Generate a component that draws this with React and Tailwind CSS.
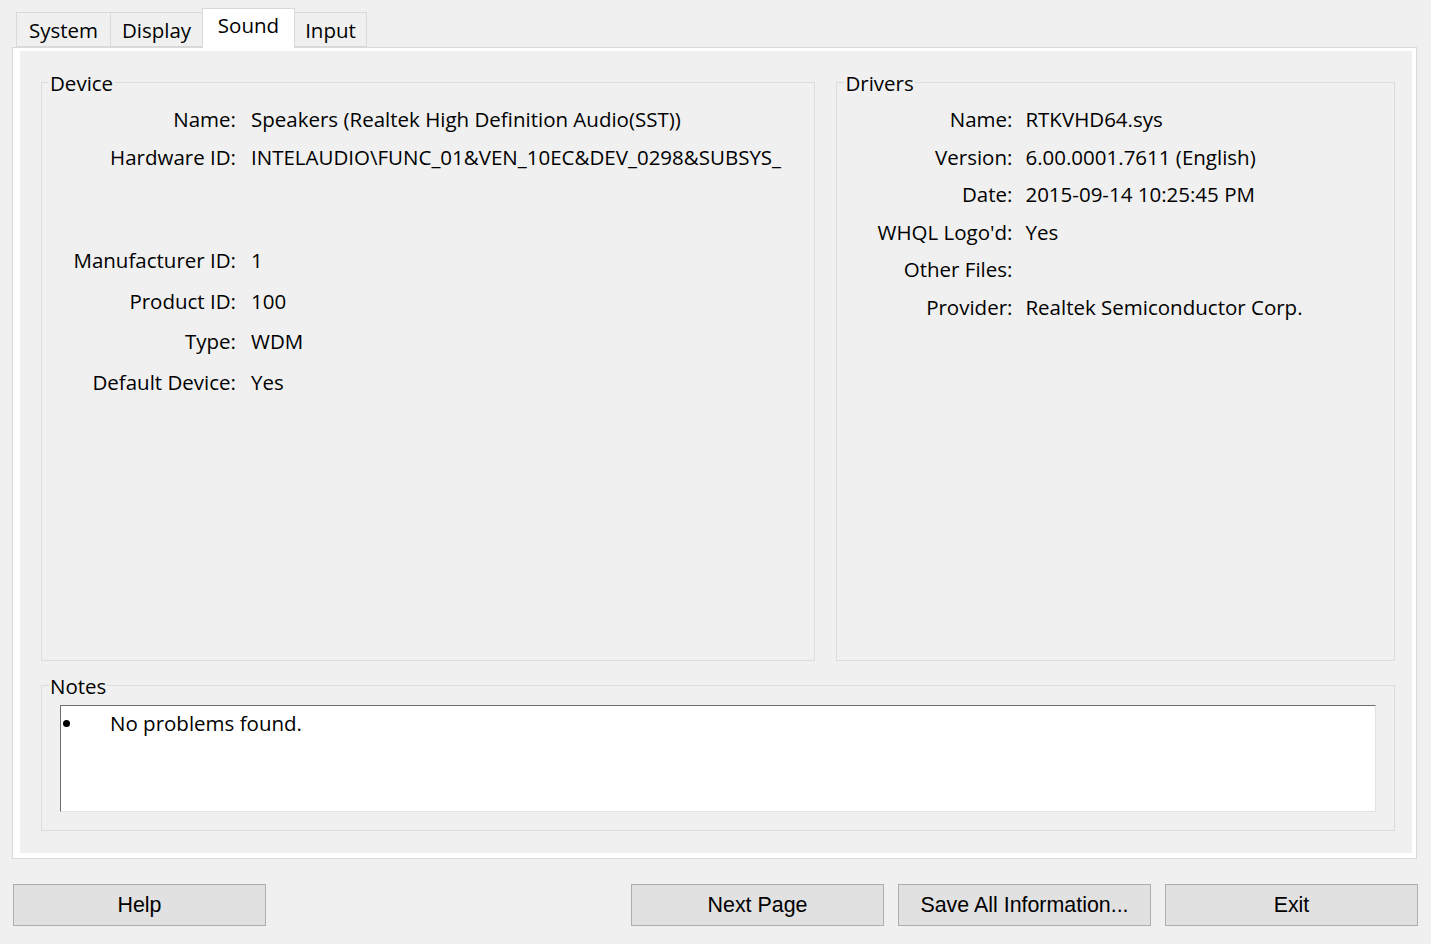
import React from 'react';

const ui = { fontFamily: '"Open Sans", "Noto Sans", sans-serif' };
const btnFont = { fontFamily: '"Liberation Sans", Arial, sans-serif' };

const Tab = ({ label, active, w }) => (
    <div
        className={`flex items-center justify-center border border-[#d9d9d9] ${active ? 'bg-white border-b-0 h-[40px] pb-[6px] -mb-px relative z-10' : 'bg-[#f0f0f0] h-[35px] pt-[1px]'} ${w}`}
    >
        <span className="text-[20.5px] text-black">{label}</span>
    </div>
);

const GroupBox = ({ title, className, children }) => (
    <div className={`relative border border-[#dcdcdc] ${className}`}>
        <span className="absolute left-[7px] -top-[13px] bg-[#f0f0f0] px-[1px] text-[20.5px] leading-[26px] text-black">
            {title}
        </span>
        {children}
    </div>
);

const Row = ({ label, value, labelW, gap, mt, clip }) => (
    <div className={`flex items-center h-[26px] ${mt}`}>
        <div className={`${labelW} text-right shrink-0`}>{label}</div>
        <div className={`${gap} whitespace-nowrap ${clip ? 'overflow-hidden w-[546px]' : ''}`}>{value}</div>
    </div>
);

const Button = ({ label, className }) => (
    <button
        className={`h-[42px] w-[253px] border border-[#adadad] bg-[#e1e1e1] text-[21.4px] leading-[24px] text-black ${className}`}
        style={btnFont}
    >
        {label}
    </button>
);

export default function App() {
    return (
        <div className="w-[1431px] h-[944px] bg-[#f0f0f0] text-[20.5px] text-black overflow-hidden" style={ui}>
            {/* Tabs */}
            <div className="flex items-end pl-[16px] pt-[8px] h-[47px]">
                <Tab label="System" w="w-[95px]" />
                <Tab label="Display" w="w-[93px] -ml-px" />
                <Tab label="Sound" active w="w-[93px] -ml-px" />
                <Tab label="Input" w="w-[73px] -ml-px" />
            </div>

            {/* Tab page */}
            <div className="ml-[12px] w-[1405px] h-[812px] border border-[#d9d9d9] bg-white pl-[7px] pr-[4px] pt-[3px] pb-[5px]">
                <div className="h-full bg-[#f0f0f0] pl-[21px] pr-[17px] pt-[31px]">
                    <div className="flex gap-[21px]">
                        <GroupBox title="Device" className="w-[775px] h-[579px]">
                            <div className="pt-[23px]">
                                <Row labelW="w-[194px]" gap="pl-[15px]" clip label="Name:" value="Speakers (Realtek High Definition Audio(SST))" />
                                <Row labelW="w-[194px]" gap="pl-[15px]" clip mt="mt-[12px]" label="Hardware ID:" value="INTELAUDIO\FUNC_01&VEN_10EC&DEV_0298&SUBSYS_10280740&REV_1000" />
                                <Row labelW="w-[194px]" gap="pl-[15px]" mt="mt-[77px]" label="Manufacturer ID:" value="1" />
                                <Row labelW="w-[194px]" gap="pl-[15px]" mt="mt-[15px]" label="Product ID:" value="100" />
                                <Row labelW="w-[194px]" gap="pl-[15px]" mt="mt-[14px]" label="Type:" value="WDM" />
                                <Row labelW="w-[194px]" gap="pl-[15px]" mt="mt-[15px]" label="Default Device:" value="Yes" />
                            </div>
                        </GroupBox>
                        <GroupBox title="Drivers" className="w-[559px] h-[579px]">
                            <div className="pt-[23px]">
                                <Row labelW="w-[175px]" gap="pl-[13px]" label="Name:" value="RTKVHD64.sys" />
                                <Row labelW="w-[175px]" gap="pl-[13px]" mt="mt-[12px]" label="Version:" value="6.00.0001.7611 (English)" />
                                <Row labelW="w-[175px]" gap="pl-[13px]" mt="mt-[11px]" label="Date:" value="2015-09-14 10:25:45 PM" />
                                <Row labelW="w-[175px]" gap="pl-[13px]" mt="mt-[12px]" label="WHQL Logo'd:" value="Yes" />
                                <Row labelW="w-[175px]" gap="pl-[13px]" mt="mt-[11px]" label="Other Files:" value="" />
                                <Row labelW="w-[175px]" gap="pl-[13px]" mt="mt-[12px]" label="Provider:" value="Realtek Semiconductor Corp." />
                            </div>
                        </GroupBox>
                    </div>

                    <GroupBox title="Notes" className="mt-[24px] h-[146px] px-[18px] pt-[19px]">
                        <div className="h-[107px] bg-white border-t border-l border-[#6d6d6d] border-r-[#e3e3e3] border-b-[#e3e3e3] border-r border-b flex items-start pt-[4px]">
                            <div className="w-[49px] h-[26px] pl-[2px] flex items-center">
                                <div className="w-[7px] h-[7px] rounded-full bg-black" />
                            </div>
                            <span className="leading-[26px]">No problems found.</span>
                        </div>
                    </GroupBox>
                </div>
            </div>

            {/* Buttons */}
            <div className="flex mt-[25px] pl-[13px]">
                <Button label="Help" />
                <Button label="Next Page" className="ml-[365px]" />
                <Button label="Save All Information..." className="ml-[14px]" />
                <Button label="Exit" className="ml-[14px]" />
            </div>
        </div>
    );
}
